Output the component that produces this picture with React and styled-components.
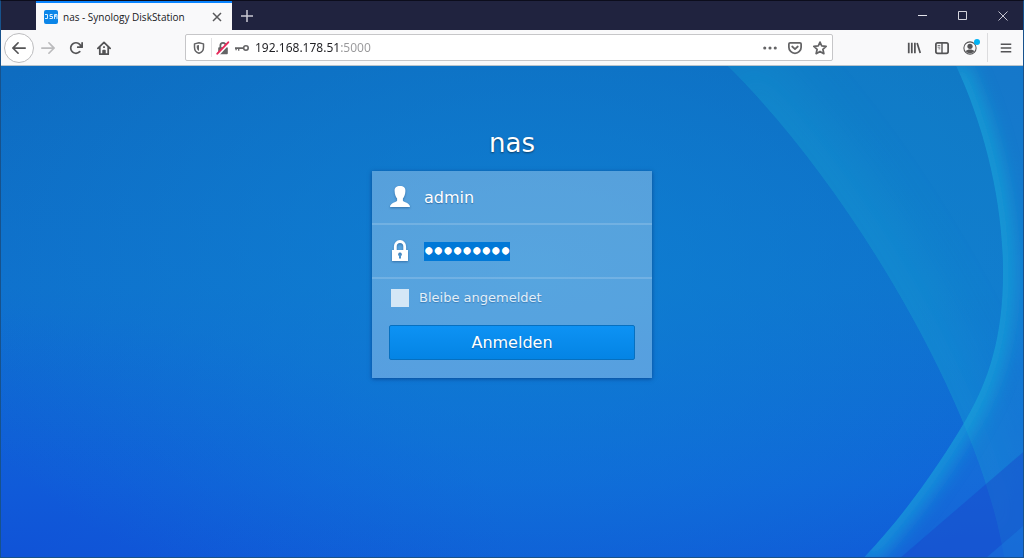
import { useEffect, useRef, useState } from "react";
import styled, { createGlobalStyle } from "styled-components";

export default function App() {
    return (
        <>
            <GlobalStyle />
            <WINDOW>
                <TitleBar />
                <Toolbar />
                <LoginPage />
            </WINDOW>
        </>
    );
}

function TitleBar() {
    return (
        <TITLEBAR>
            <TAB>
                <FAVICON viewBox="0 0 14 14" aria-hidden="true">
                    <rect width="14" height="14" rx="2" fill="#0c86e8" />
                    <path
                        d="M1 4.500h2.500v4H1M8.500 4.500H6v2h2.500v2H5.500M10.500 9V4.500h2.500V9M11.700 4.500v2.500"
                        fill="none"
                        stroke="#d9efff"
                    />
                </FAVICON>
                <TABTITLE>nas - Synology DiskStation</TABTITLE>
                <TABCLOSE aria-label="Tab schließen">
                    <svg width="10" height="10" viewBox="0 0 10 10">
                        <path d="M1 1l8 8M9 1L1 9" stroke="#58585a" strokeWidth="1.500" />
                    </svg>
                </TABCLOSE>
            </TAB>
            <NEWTAB aria-label="Neuer Tab">
                <svg width="12" height="12" viewBox="0 0 12 12">
                    <path d="M6 0v12M0 6h12" stroke="#c9c9d4" strokeWidth="1.500" />
                </svg>
            </NEWTAB>
            <CONTROLS>
                <CONTROL aria-label="Minimieren">
                    <svg width="10" height="10" viewBox="0 0 10 10">
                        <path d="M0 4.500h9" stroke="#e4e4ec" />
                    </svg>
                </CONTROL>
                <CONTROL aria-label="Maximieren">
                    <svg width="10" height="10" viewBox="0 0 10 10">
                        <path d="M.5.5h8v8h-8z" fill="none" stroke="#d4d4dc" />
                    </svg>
                </CONTROL>
                <CONTROL aria-label="Schließen">
                    <svg width="10" height="10" viewBox="0 0 10 10">
                        <path d="M.5.5l9 9M9.500.5l-9 9" stroke="#c4c4d0" />
                    </svg>
                </CONTROL>
            </CONTROLS>
        </TITLEBAR>
    );
}

function Toolbar() {
    const [url, setUrl] = useState("192.168.178.51:5000");
    return (
        <TOOLBAR>
            <BACK aria-label="Zurück">
                <Glyph size={14}>
                    <path d="M15 7H3.400l4.300-4.300a1 1 0 0 0-1.400-1.400l-6 6a1 1 0 0 0 0 1.400l6 6a1 1 0 0 0 1.400-1.400L3.400 9H15a1 1 0 0 0 0-2z" />
                </Glyph>
            </BACK>
            <TOOL aria-label="Vor" $faded>
                <Glyph size={14}>
                    <path d="M1 7h11.600L8.300 2.700a1 1 0 0 1 1.400-1.400l6 6a1 1 0 0 1 0 1.400l-6 6a1 1 0 0 1-1.400-1.400L12.600 9H1a1 1 0 0 1 0-2z" />
                </Glyph>
            </TOOL>
            <TOOL aria-label="Neu laden">
                <Glyph size={14}>
                    <path d="M15 1a1 1 0 0 0-1 1v2.418A6.995 6.995 0 1 0 8 15a6.954 6.954 0 0 0 4.950-2.050 1 1 0 0 0-1.414-1.414A5.019 5.019 0 1 1 12.549 6H10a1 1 0 0 0 0 2h5a1 1 0 0 0 1-1V2a1 1 0 0 0-1-1z" />
                </Glyph>
            </TOOL>
            <TOOL aria-label="Startseite">
                <Glyph size={14}>
                    <path
                        d="M1 8.500L8 1.500l7 7M3.200 7v8h9.600V7"
                        fill="none"
                        stroke="currentColor"
                        strokeWidth="2"
                        strokeLinecap="round"
                        strokeLinejoin="round"
                    />
                    <path d="M6 15v-4a1 1 0 0 1 1-1h2a1 1 0 0 1 1 1v4z" />
                    <path d="M7 6h2v2H7z" />
                </Glyph>
            </TOOL>
            <URLBAR>
                <URLICON $w={25} aria-label="Schutz">
                    <Glyph size={12}>
                        <path
                            d="M8 1l6 1.500V7c0 4-2.500 7-6 8-3.500-1-6-4-6-8V2.500z"
                            fill="none"
                            stroke="currentColor"
                            strokeWidth="2"
                            strokeLinejoin="round"
                        />
                        <path d="M8 4v8C6 11 5 9 5 7V4.700z" />
                    </Glyph>
                </URLICON>
                <URLDIVIDER />
                <URLICON $w={22} aria-label="Verbindung nicht sicher">
                    <Glyph size={14}>
                        <path d="M5 8V5a3 3 0 0 1 6 0v3" fill="none" stroke="currentColor" strokeWidth="2" />
                        <rect x="2.500" y="7" width="11" height="8" rx="1" />
                        <path d="M2.500 15.500L15 2" stroke="#fff" strokeWidth="3" />
                        <path d="M1.500 14.500L14 1.500" stroke="#e8285a" strokeWidth="2.200" strokeLinecap="round" />
                    </Glyph>
                </URLICON>
                <URLICON $w={16} aria-label="Gespeicherte Zugangsdaten">
                    <Glyph size={14}>
                        <circle cx="12.500" cy="8" r="2.600" fill="none" stroke="currentColor" strokeWidth="1.800" />
                        <path d="M0 7h10v2H5v2H3.500V9H2v1.500H.5V9H0z" />
                    </Glyph>
                </URLICON>
                <URLINPUT aria-label="Adresse" value={url} onChange={(e) => setUrl(e.target.value)} />
                <URLICON $w={25} aria-label="Seitenaktionen">
                    <Glyph size={14}>
                        <circle cx="2" cy="8" r="1.800" />
                        <circle cx="8" cy="8" r="1.800" />
                        <circle cx="14" cy="8" r="1.800" />
                    </Glyph>
                </URLICON>
                <URLICON $w={25} aria-label="Bei Pocket speichern">
                    <Glyph size={14}>
                        <path
                            d="M2.500 2h11A1.500 1.500 0 0 1 15 3.500V7A7 7 0 0 1 1 7V3.500A1.500 1.500 0 0 1 2.500 2zM4.800 6.300L8 9.300l3.200-3"
                            fill="none"
                            stroke="currentColor"
                            strokeWidth="2"
                            strokeLinecap="round"
                            strokeLinejoin="round"
                        />
                    </Glyph>
                </URLICON>
                <URLICON $w={25} aria-label="Lesezeichen">
                    <Glyph size={14}>
                        <path
                            d="M8 1.200l2 4.500 5 .5-3.700 3.300 1.100 5L8 12l-4.400 2.500 1.100-5L1 6.200l5-.5z"
                            fill="none"
                            stroke="currentColor"
                            strokeWidth="2"
                            strokeLinejoin="round"
                        />
                    </Glyph>
                </URLICON>
            </URLBAR>
            <TOOL aria-label="Bibliothek">
                <Glyph size={14}>
                    <path d="M1 2h2v12H1zM4.500 2h2v12h-2zM8 2h2v12H8zM10.600 2.500l1.900-.6 3.600 11.500-1.900.6z" />
                </Glyph>
            </TOOL>
            <TOOL aria-label="Seitenleiste">
                <Glyph size={14}>
                    <rect x="1" y="2" width="14" height="12" rx="2" fill="none" stroke="currentColor" strokeWidth="2" />
                    <path d="M7.200 2h1.600v12H7.200zM3 4.500h3v1H3zM3 6.500h3v1H3zM4 8.500h2v1H4z" />
                </Glyph>
            </TOOL>
            <TOOL aria-label="Konto">
                <Glyph size={14}>
                    <circle cx="8" cy="8" r="7" fill="none" stroke="currentColor" strokeWidth="1.200" />
                    <circle cx="8" cy="6" r="3" />
                    <path d="M3 11.500c2-2.500 8-2.500 10 0-2 3.400-8 3.400-10 0z" />
                </Glyph>
                <BADGE />
            </TOOL>
            <TOOLDIVIDER />
            <MENU aria-label="Menü">
                <Glyph size={12}>
                    <path d="M1 2h14v2H1zM1 7h14v2H1zM1 12h14v2H1z" />
                </Glyph>
            </MENU>
        </TOOLBAR>
    );
}

function Glyph({ size, children }) {
    return (
        <svg width={size} height={size} viewBox="0 0 16 16" fill="currentColor" aria-hidden="true">
            {children}
        </svg>
    );
}

function LoginPage() {
    const [user, setUser] = useState("admin");
    const [password, setPassword] = useState("synology1");
    const passwordRef = useRef(null);

    useEffect(() => {
        passwordRef.current.focus();
        passwordRef.current.select();
    }, []);

    return (
        <PAGE>
            <Waves />
            <HOST>nas</HOST>
            <FORM onSubmit={(e) => e.preventDefault()}>
                <FIELD>
                    <svg width="22" height="24" viewBox="0 0 22 24" aria-hidden="true">
                        <path
                            d="M11 1c3.600 0 5.600 1.800 5.400 5-.1 3.500-1.200 6-2.500 7.500v2.300c.6 1.500 7 1.900 7.100 6.200H1c.1-4.300 6.500-4.700 7.100-6.200v-2.300C6.800 12 5.700 9.500 5.600 6 5.400 2.800 7.400 1 11 1z"
                            fill="#fff"
                        />
                    </svg>
                    <INPUT aria-label="Benutzername" value={user} onChange={(e) => setUser(e.target.value)} />
                </FIELD>
                <FIELD>
                    <svg width="22" height="24" viewBox="0 0 22 24" aria-hidden="true">
                        <path d="M6.300 12V7.500a4.700 5 0 0 1 9.400 0V12" fill="none" stroke="#fff" strokeWidth="2.800" />
                        <path
                            fillRule="evenodd"
                            d="M3 11h16v11H3zM11 13.500a1.900 1.900 0 0 0-1 3.500v2.500h2V17a1.900 1.900 0 0 0-1-3.500z"
                            fill="#fff"
                        />
                    </svg>
                    <PASSWORD
                        ref={passwordRef}
                        type="password"
                        aria-label="Passwort"
                        value={password}
                        onChange={(e) => setPassword(e.target.value)}
                    />
                </FIELD>
                <REMEMBER>
                    <CHECKBOX type="checkbox" />
                    Bleibe angemeldet
                </REMEMBER>
                <SUBMIT type="submit">Anmelden</SUBMIT>
            </FORM>
        </PAGE>
    );
}

const CURVE = "M728 0C850 120 980 340 1005 492";
const RIBBON = "M957 0C985 60 1004 135 1004 207C1004 270 990 315 967 354C940 400 905 450 865 492";

function Waves() {
    return (
        <WAVES viewBox="0 0 1024 492" preserveAspectRatio="xMaxYMin slice" aria-hidden="true">
            <defs>
                <clipPath id="curve">
                    <path d={CURVE + "H1024V0z"} />
                </clipPath>
                <clipPath id="ribbon">
                    <path d={RIBBON + "H1024V0z"} />
                </clipPath>
                <filter id="wide" x="-50%" y="-50%" width="200%" height="200%">
                    <feGaussianBlur stdDeviation="26" />
                </filter>
                <filter id="narrow" x="-50%" y="-50%" width="200%" height="200%">
                    <feGaussianBlur stdDeviation="9" />
                </filter>
            </defs>
            <g clipPath="url(#curve)">
                <path d={CURVE + "H1024V0z"} fill="#18a0d0" opacity=".24" />
                <path d={CURVE} fill="none" stroke="#18b0d8" strokeWidth="70" opacity=".2" filter="url(#wide)" />
            </g>
            <g clipPath="url(#ribbon)">
                <path d={RIBBON + "H1024V0z"} fill="#2078d8" opacity=".3" />
                <path d={RIBBON} fill="none" stroke="#14b4dc" strokeWidth="24" opacity=".55" filter="url(#narrow)" />
                <path d="M902 492L1024 387V492z" fill="#1838c8" opacity=".32" />
                <path d="M988 492L1024 461V492z" fill="#1880e0" opacity=".4" />
            </g>
        </WAVES>
    );
}

const GlobalStyle = createGlobalStyle`
    * {
        box-sizing: border-box;
    }
    body {
        margin: 0;
        font-family: "Noto Sans", "Open Sans", sans-serif;
    }
    button {
        padding: 0;
        border: 0;
        background: none;
        font-family: inherit;
    }
`;
const WINDOW = styled.div`
    display: flex;
    flex-direction: column;
    min-height: 100vh;
    border: 1px solid #17528c;
    border-top-color: #0c0d1c;
`;
const TITLEBAR = styled.header`
    display: flex;
    height: 29px;
    padding-left: 35px;
    background: #20233f;
`;
const TAB = styled.div`
    display: flex;
    align-items: center;
    width: 196px;
    padding: 0 8px;
    border-top: 2px solid #0a84ff;
    background: #f9f9fa;
`;
const FAVICON = styled.svg`
    flex: none;
    width: 14px;
    height: 14px;
    margin-right: 5px;
`;
const TABTITLE = styled.span`
    flex: 1;
    color: #18181c;
    font-family: "Open Sans", sans-serif;
    font-size: 10px;
    white-space: nowrap;
`;
const TABCLOSE = styled.button`
    display: grid;
    place-items: center;
    width: 14px;
    height: 20px;
`;
const NEWTAB = styled.button`
    display: grid;
    place-items: center;
    width: 30px;
`;
const CONTROLS = styled.div`
    display: flex;
    margin-left: auto;
`;
const CONTROL = styled.button`
    display: grid;
    place-items: center;
    width: 40px;
`;
const TOOLBAR = styled.nav`
    display: flex;
    align-items: center;
    height: 36px;
    padding: 0 0 0 3px;
    border-bottom: 1px solid #b8c4cc;
    background: #f9f9fa;
`;
const TOOL = styled.button`
    position: relative;
    display: grid;
    place-items: center;
    width: 28px;
    height: 28px;
    color: ${(props) => (props.$faded ? "#bbbbbd" : "#545456")};
`;
const BACK = styled(TOOL)`
    width: 30px;
    height: 30px;
    border: 1px solid #bdbdbf;
    border-radius: 50%;
    background: #fff;
`;
const MENU = styled(TOOL)`
    width: 35px;
`;
const BADGE = styled.span`
    position: absolute;
    top: 5px;
    right: 4px;
    width: 6px;
    height: 6px;
    border-radius: 50%;
    background: #00b3f4;
`;
const TOOLDIVIDER = styled.span`
    width: 1px;
    height: 29px;
    margin-left: 3px;
    background: #dcdcde;
`;
const URLBAR = styled.div`
    flex: 1;
    display: flex;
    align-items: center;
    height: 27px;
    margin: 0 67px;
    border: 1px solid #c6c6c8;
    border-radius: 2px;
    background: #fff;
`;
const URLICON = styled.button`
    display: grid;
    place-items: center;
    width: ${(props) => props.$w}px;
    color: #646466;
`;
const URLDIVIDER = styled.span`
    width: 1px;
    height: 19px;
    background: #e2e2e4;
`;
/* the port is shown paler than the host */
const URLINPUT = styled.input`
    flex: 1;
    min-width: 0;
    padding: 0 0 0 5px;
    border: 0;
    outline: 0;
    background: linear-gradient(90deg, #202024 90px, #98989a 90px);
    background-clip: text;
    color: transparent;
    font-family: inherit;
    font-size: 12px;
`;
const PAGE = styled.main`
    position: relative;
    flex: 1;
    display: flex;
    flex-direction: column;
    align-items: center;
    padding: 61px 16px 40px;
    overflow: hidden;
    background:
        radial-gradient(ellipse 60% 75% at 52% 42%, rgba(14, 132, 212, 0.7), rgba(14, 132, 212, 0) 100%),
        radial-gradient(ellipse 50% 50% at 0% 100%, rgba(16, 72, 214, 0.45), rgba(16, 72, 214, 0) 100%),
        linear-gradient(180deg, #0e6cc0 0%, #0f70cc 45%, #1064da 85%, #105cd8 100%);
    font-family: "DejaVu Sans", sans-serif;
`;
const WAVES = styled.svg`
    position: absolute;
    inset: 0;
    width: 100%;
    height: 100%;
`;
const HOST = styled.h1`
    position: relative;
    margin: 0 0 12px;
    color: #fff;
    font-size: 26px;
    font-weight: 400;
    line-height: 32px;
    text-shadow: 0 1px 2px rgba(0, 0, 0, 0.5);
`;
const FORM = styled.form`
    position: relative;
    display: flex;
    flex-direction: column;
    width: 100%;
    max-width: 280px;
    padding-bottom: 18px;
    background: rgba(255, 255, 255, 0.3);
    box-shadow: 0 1px 4px rgba(0, 30, 90, 0.5);
`;
const FIELD = styled.div`
    display: flex;
    align-items: center;
    gap: 13px;
    height: 54px;
    padding: 0 17px;
    border-bottom: 2px solid rgba(255, 255, 255, 0.16);
    svg {
        flex: none;
        filter: drop-shadow(0 1px 1px rgba(0, 40, 90, 0.4));
    }
`;
const INPUT = styled.input`
    flex: 1;
    min-width: 0;
    padding: 0;
    border: 0;
    outline: 0;
    background: none;
    color: #fff;
    font-family: inherit;
    font-size: 16px;
    text-shadow: 0 1px 1px rgba(0, 40, 90, 0.4);
    &::selection {
        background: #0078d7;
        color: #fff;
    }
`;
/* bold with solid shadows gives the large dots */
const PASSWORD = styled(INPUT)`
    height: 19px;
    font-size: 15px;
    font-weight: 700;
    line-height: 19px;
    &,
    &::selection {
        text-shadow: 1px 1px #fff, -1px 1px #fff, 0 2px #fff;
    }
`;
const REMEMBER = styled.label`
    display: flex;
    align-items: center;
    gap: 10px;
    margin: 10px 19px 18px;
    color: #e2eff9;
    font-size: 13px;
    line-height: 18px;
    text-shadow: 0 1px 1px rgba(0, 40, 90, 0.3);
`;
const CHECKBOX = styled.input`
    appearance: none;
    width: 18px;
    height: 18px;
    margin: 0;
    background: #d4e7f6;
    &:checked {
        background: #0a84e4;
    }
`;
const SUBMIT = styled.button`
    height: 35px;
    margin: 0 17px;
    && {
        border: 1px solid #0670c0;
        background: linear-gradient(#0d92f4, #0484e4);
    }
    border-radius: 2px;
    color: #fff;
    font-size: 16px;
    text-shadow: 0 1px 1px rgba(0, 40, 90, 0.4);
`;
